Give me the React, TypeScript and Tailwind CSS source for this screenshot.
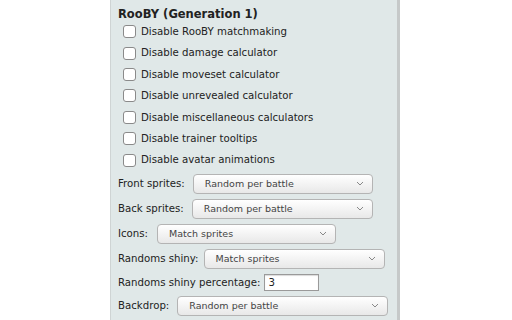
import React from "react";

const checks = [
  "Disable RooBY matchmaking",
  "Disable damage calculator",
  "Disable moveset calculator",
  "Disable unrevealed calculator",
  "Disable miscellaneous calculators",
  "Disable trainer tooltips",
  "Disable avatar animations",
];

function Select({ value, width }: { value: string; width: string }) {
  return (
    <div
      className={`flex h-[20px] items-center justify-between rounded-[4px] border border-[#b4b4b4] bg-gradient-to-b from-white to-[#e8e8e8] pl-[11px] pr-[8px] text-[9.5px] text-[#444] ${width}`}
    >
      <span>{value}</span>
      <svg width="8" height="5" viewBox="0 0 8 5" className="text-[#888]">
        <path d="M1 1l3 3 3-3" fill="none" stroke="currentColor" strokeWidth="1" />
      </svg>
    </div>
  );
}

function Row({ label, gap, children }: { label: string; gap: string; children: React.ReactNode }) {
  return (
    <div className={`flex items-center ${gap}`}>
      <span>{label}</span>
      {children}
    </div>
  );
}

export default function App() {
  return (
    <div className="h-[320px] w-[512px] overflow-hidden bg-white">
      <div
        className="ml-[110px] h-full w-[290px] border-l border-r-[3px] border-l-[#cfd4d4] border-r-[#c6c9c9] bg-[#e0e8e8] pl-[7px] pt-[5px] text-[10.2px] text-[#222]"
        style={{ fontFamily: '"DejaVu Sans", Verdana, sans-serif' }}
      >
        <div className="text-[11.5px] font-bold leading-[18px]">RooBY (Generation 1)</div>
        <div className="-mt-[2px] flex flex-col">
          {checks.map((c) => (
            <label key={c} className="flex h-[21.4px] items-center gap-[5px] pl-[5px]">
              <span className="h-[13px] w-[13px] rounded-[3px] border border-[#8a8a8a] bg-white" />
              <span>{c}</span>
            </label>
          ))}
        </div>
        <div className="mt-[3px] flex flex-col gap-[5px]">
          <Row label="Front sprites:" gap="gap-[8px]">
            <Select value="Random per battle" width="w-[180px]" />
          </Row>
          <Row label="Back sprites:" gap="gap-[8px]">
            <Select value="Random per battle" width="w-[181px]" />
          </Row>
          <Row label="Icons:" gap="gap-[9px]">
            <Select value="Match sprites" width="w-[179px]" />
          </Row>
          <Row label="Randoms shiny:" gap="gap-[5px]">
            <Select value="Match sprites" width="w-[181px]" />
          </Row>
          <Row label="Randoms shiny percentage:" gap="gap-[4px]">
            <div className="flex h-[17px] w-[55px] items-center border border-[#9a9a9a] bg-white pl-[3px] shadow-[inset_0_1px_1px_rgba(0,0,0,0.15)]">
              3
            </div>
          </Row>
          <Row label="Backdrop:" gap="gap-[8px]">
            <Select value="Random per battle" width="w-[211px]" />
          </Row>
        </div>
      </div>
    </div>
  );
}
